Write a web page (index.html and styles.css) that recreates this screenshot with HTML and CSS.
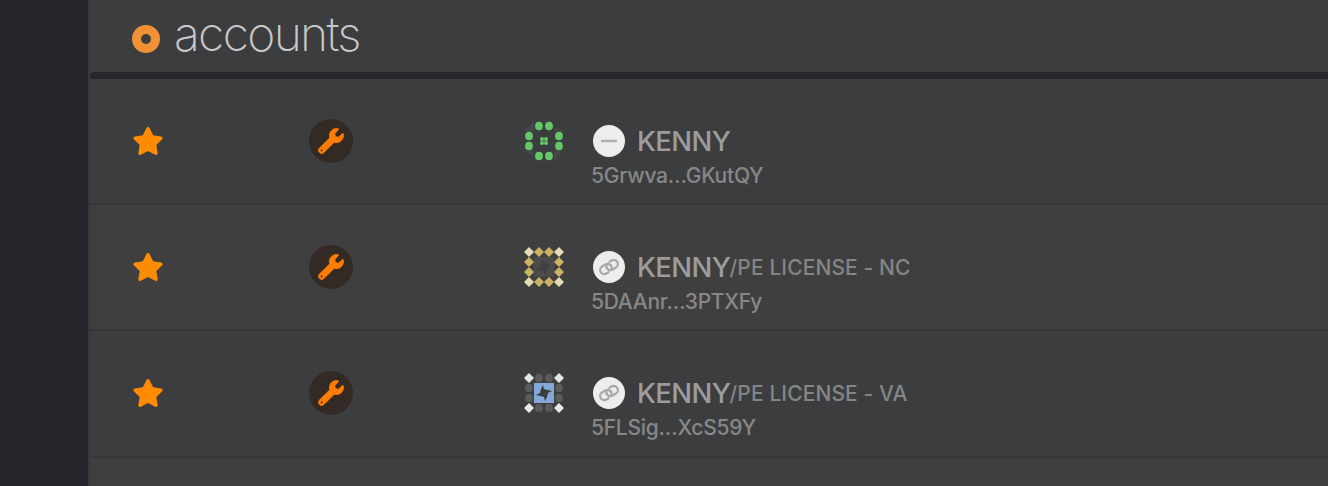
FILE: index.html
```html
<!DOCTYPE html>
<html lang="en">
<head>
<meta charset="utf-8">
<title>accounts</title>
<link rel="stylesheet" href="styles.css">
</head>
<body>
<svg class="defs" width="0" height="0" aria-hidden="true">
  <defs>
    <symbol id="star" viewBox="0 0 576 512"><path d="M259.3 17.8L194 150.2 47.9 171.5c-26.2 3.8-36.7 36.1-17.7 54.6l105.7 103-25 145.5c-4.5 26.3 23.2 46 46.4 33.7L288 439.6l130.7 68.7c23.2 12.2 50.9-7.4 46.4-33.7l-25-145.5 105.7-103c19-18.5 8.5-50.8-17.7-54.6L382 150.2 316.7 17.8c-11.7-23.6-45.6-23.9-57.4 0z"/></symbol>
    <symbol id="wrench" viewBox="-12 -12 536 536"><path d="M507.73 109.1c-2.24-9.03-13.54-12.09-20.12-5.51l-74.36 74.36-67.88-11.31-11.31-67.88 74.36-74.36c6.62-6.62 3.43-17.9-5.66-20.16-47.38-11.74-99.55.91-136.58 37.93-39.64 39.64-50.55 97.1-34.05 147.2L18.74 402.76c-24.99 24.99-24.99 65.51 0 90.5 24.99 24.99 65.51 24.99 90.5 0l213.21-213.21c50.12 16.71 107.47 5.68 147.37-34.22 37.07-37.07 49.7-89.32 37.91-136.73zM64 476c-15 0-28-13-28-28s13-28 28-28 28 13 28 28-13 28-28 28z" stroke="#ff7d01" stroke-width="20" stroke-linejoin="round"/></symbol>
    <symbol id="link" viewBox="0 0 32 32"><g transform="translate(16 16) rotate(-32)" fill="none" stroke="#a9a8a7" stroke-width="2.2" stroke-linecap="round"><path d="M-3 4.1H-5.6A4.1 4.1 0 0 1 -5.6 -4.1H-1.6A4.1 4.1 0 0 1 1.4 2.6"/><path d="M3 -4.1H5.6A4.1 4.1 0 0 1 5.6 4.1H1.6A4.1 4.1 0 0 1 -1.4 -2.6"/></g></symbol>
    <path id="diamond" d="M0-5L5 0 0 5-5 0z"/>
    <ellipse id="dot" rx="3.9" ry="4.3"/>
    <path id="whirl" d="M-1-8L0-4 3.5-3 8-2 4 0 3 4 1 8 0 4-3.5 3-8 2-4 0-3-4z"/>
  </defs>
</svg>
<div class="app">
  <aside class="sidebar"></aside>
  <main class="content">
    <header class="heading"><span class="ring"></span><h1 class="title">accounts</h1></header>
    <div class="divider"></div>
    <section class="row">
      <svg class="star"><use href="#star"/></svg>
      <span class="tool"><svg class="wrench"><use href="#wrench"/></svg></span>
      <svg class="identicon" viewBox="0 0 40 40">
        <path fill="#474647" d="M10 0v10H0zM30 6l10 4H30zM0 30h10v5zM30 30h9l-9 10z"/>
        <g fill="#64c866"><use href="#dot" x="15" y="5"/><use href="#dot" x="25" y="5"/><use href="#dot" x="5" y="15"/><use href="#dot" x="35" y="15"/><use href="#dot" x="5" y="25"/><use href="#dot" x="35" y="25"/><use href="#dot" x="15" y="35"/><use href="#dot" x="25" y="35"/><circle cx="18" cy="18" r="2.1"/><circle cx="22" cy="18" r="2.1"/><circle cx="18" cy="22" r="2.1"/><circle cx="22" cy="22" r="2.1"/></g>
      </svg>
      <div class="account">
        <div class="name-line"><svg class="badge" viewBox="0 0 32 32"><path d="M9 16h14" stroke="#b1b0ae" stroke-width="2.4" stroke-linecap="round"/></svg><span class="name">KENNY</span></div>
        <div class="address">5Grwva…GKutQY</div>
      </div>
    </section>
    <section class="row alt">
      <svg class="star"><use href="#star"/></svg>
      <span class="tool"><svg class="wrench"><use href="#wrench"/></svg></span>
      <svg class="identicon" viewBox="0 0 40 40">
        <path fill="#4b4b4b" d="M10 10h20v20H10z"/><use href="#whirl" x="20" y="20" fill="#404040"/>
        <g fill="#cab464"><use href="#diamond" x="15" y="5"/><use href="#diamond" x="25" y="5"/><use href="#diamond" x="5" y="15"/><use href="#diamond" x="35" y="15"/><use href="#diamond" x="5" y="25"/><use href="#diamond" x="35" y="25"/><use href="#diamond" x="15" y="35"/><use href="#diamond" x="25" y="35"/></g>
        <g fill="#e4dbb4"><use href="#diamond" x="5" y="5"/><use href="#diamond" x="35" y="5"/><use href="#diamond" x="5" y="35"/><use href="#diamond" x="35" y="35"/></g>
      </svg>
      <div class="account">
        <div class="name-line"><svg class="badge"><use href="#link"/></svg><span class="name">KENNY</span><span class="sub">/PE LICENSE - NC</span></div>
        <div class="address">5DAAnr…3PTXFy</div>
      </div>
    </section>
    <section class="row third">
      <svg class="star"><use href="#star"/></svg>
      <span class="tool"><svg class="wrench"><use href="#wrench"/></svg></span>
      <svg class="identicon" viewBox="0 0 40 40">
        <path fill="#83a9d9" d="M10 10h20v20H10z"/><use href="#whirl" x="20" y="20" fill="#3c3d3f"/>
        <g fill="#5b5b5b"><use href="#dot" x="15" y="5"/><use href="#dot" x="25" y="5"/><use href="#dot" x="5" y="15"/><use href="#dot" x="35" y="15"/><use href="#dot" x="5" y="25"/><use href="#dot" x="35" y="25"/><use href="#dot" x="15" y="35"/><use href="#dot" x="25" y="35"/></g>
        <g fill="#e7e7e7"><use href="#diamond" x="5" y="5"/><use href="#diamond" x="35" y="5"/><use href="#diamond" x="5" y="35"/><use href="#diamond" x="35" y="35"/></g>
      </svg>
      <div class="account">
        <div class="name-line"><svg class="badge"><use href="#link"/></svg><span class="name">KENNY</span><span class="sub">/PE LICENSE - VA</span></div>
        <div class="address">5FLSig…XcS59Y</div>
      </div>
    </section>
    <section class="row alt last"></section>
  </main>
</div>
</body>
</html>
```
FILE: styles.css
```css
* { box-sizing: border-box; }
body { margin: 0; overflow: hidden; background: #3c3d3f; font-family: Inter, "Liberation Sans", sans-serif; }
.defs { display: block; }
.app { display: flex; width: 1328px; height: 486px; overflow: hidden; }
.sidebar { flex: none; width: 88px; background: #26272d; }
.content { flex: 1; min-width: 0; border-left: 2px solid #38393b; }
.heading { display: flex; align-items: flex-start; height: 72px; padding-left: 42px; }
.ring { width: 28px; height: 28px; margin-top: 25px; border: 9px solid #f19135; border-radius: 50%; }
.title { margin: 5px 0 0 14px; font-size: 48px; font-weight: 220; line-height: 58px; letter-spacing: -1.7px; color: #cac8c8; }
.divider { height: 7px; border-radius: 4px 0 0 0; background: #26272d; }
.row { display: flex; align-items: flex-start; height: 126px; border-bottom: 2px solid #363738; }
.alt { background: #403f3f; }
.third { height: 127px; }
.last { height: 28px; border: 0; }
.star { flex: none; width: 32px; height: 28px; margin: 48px 0 0 42px; fill: #ff8c00; }
.tool { flex: none; display: flex; align-items: center; justify-content: center; width: 44px; height: 44px; margin: 40px 0 0 145px; border-radius: 50%; background: #332925; }
.wrench { width: 26px; height: 26px; fill: #ff7d01; }
.identicon { flex: none; width: 40px; height: 40px; margin: 42px 0 0 171px; }
.account { margin: 46px 0 0 27px; }
.name-line { display: flex; height: 32px; padding-left: 2px; white-space: nowrap; line-height: 32px; }
.badge { flex: none; width: 32px; height: 32px; margin-right: 12px; border-radius: 50%; background: #eeedeb; }
.name { width: 92.5px; font-size: 27.5px; font-weight: 500; letter-spacing: -0.6px; color: #9c9c9d; }
.sub { padding-top: 1px; font-size: 21px; font-weight: 450; letter-spacing: 0.1px; color: #858585; }
.address { margin-top: 6px; font-size: 21px; font-weight: 450; line-height: 26px; letter-spacing: -0.25px; color: #878787; white-space: nowrap; }
```
